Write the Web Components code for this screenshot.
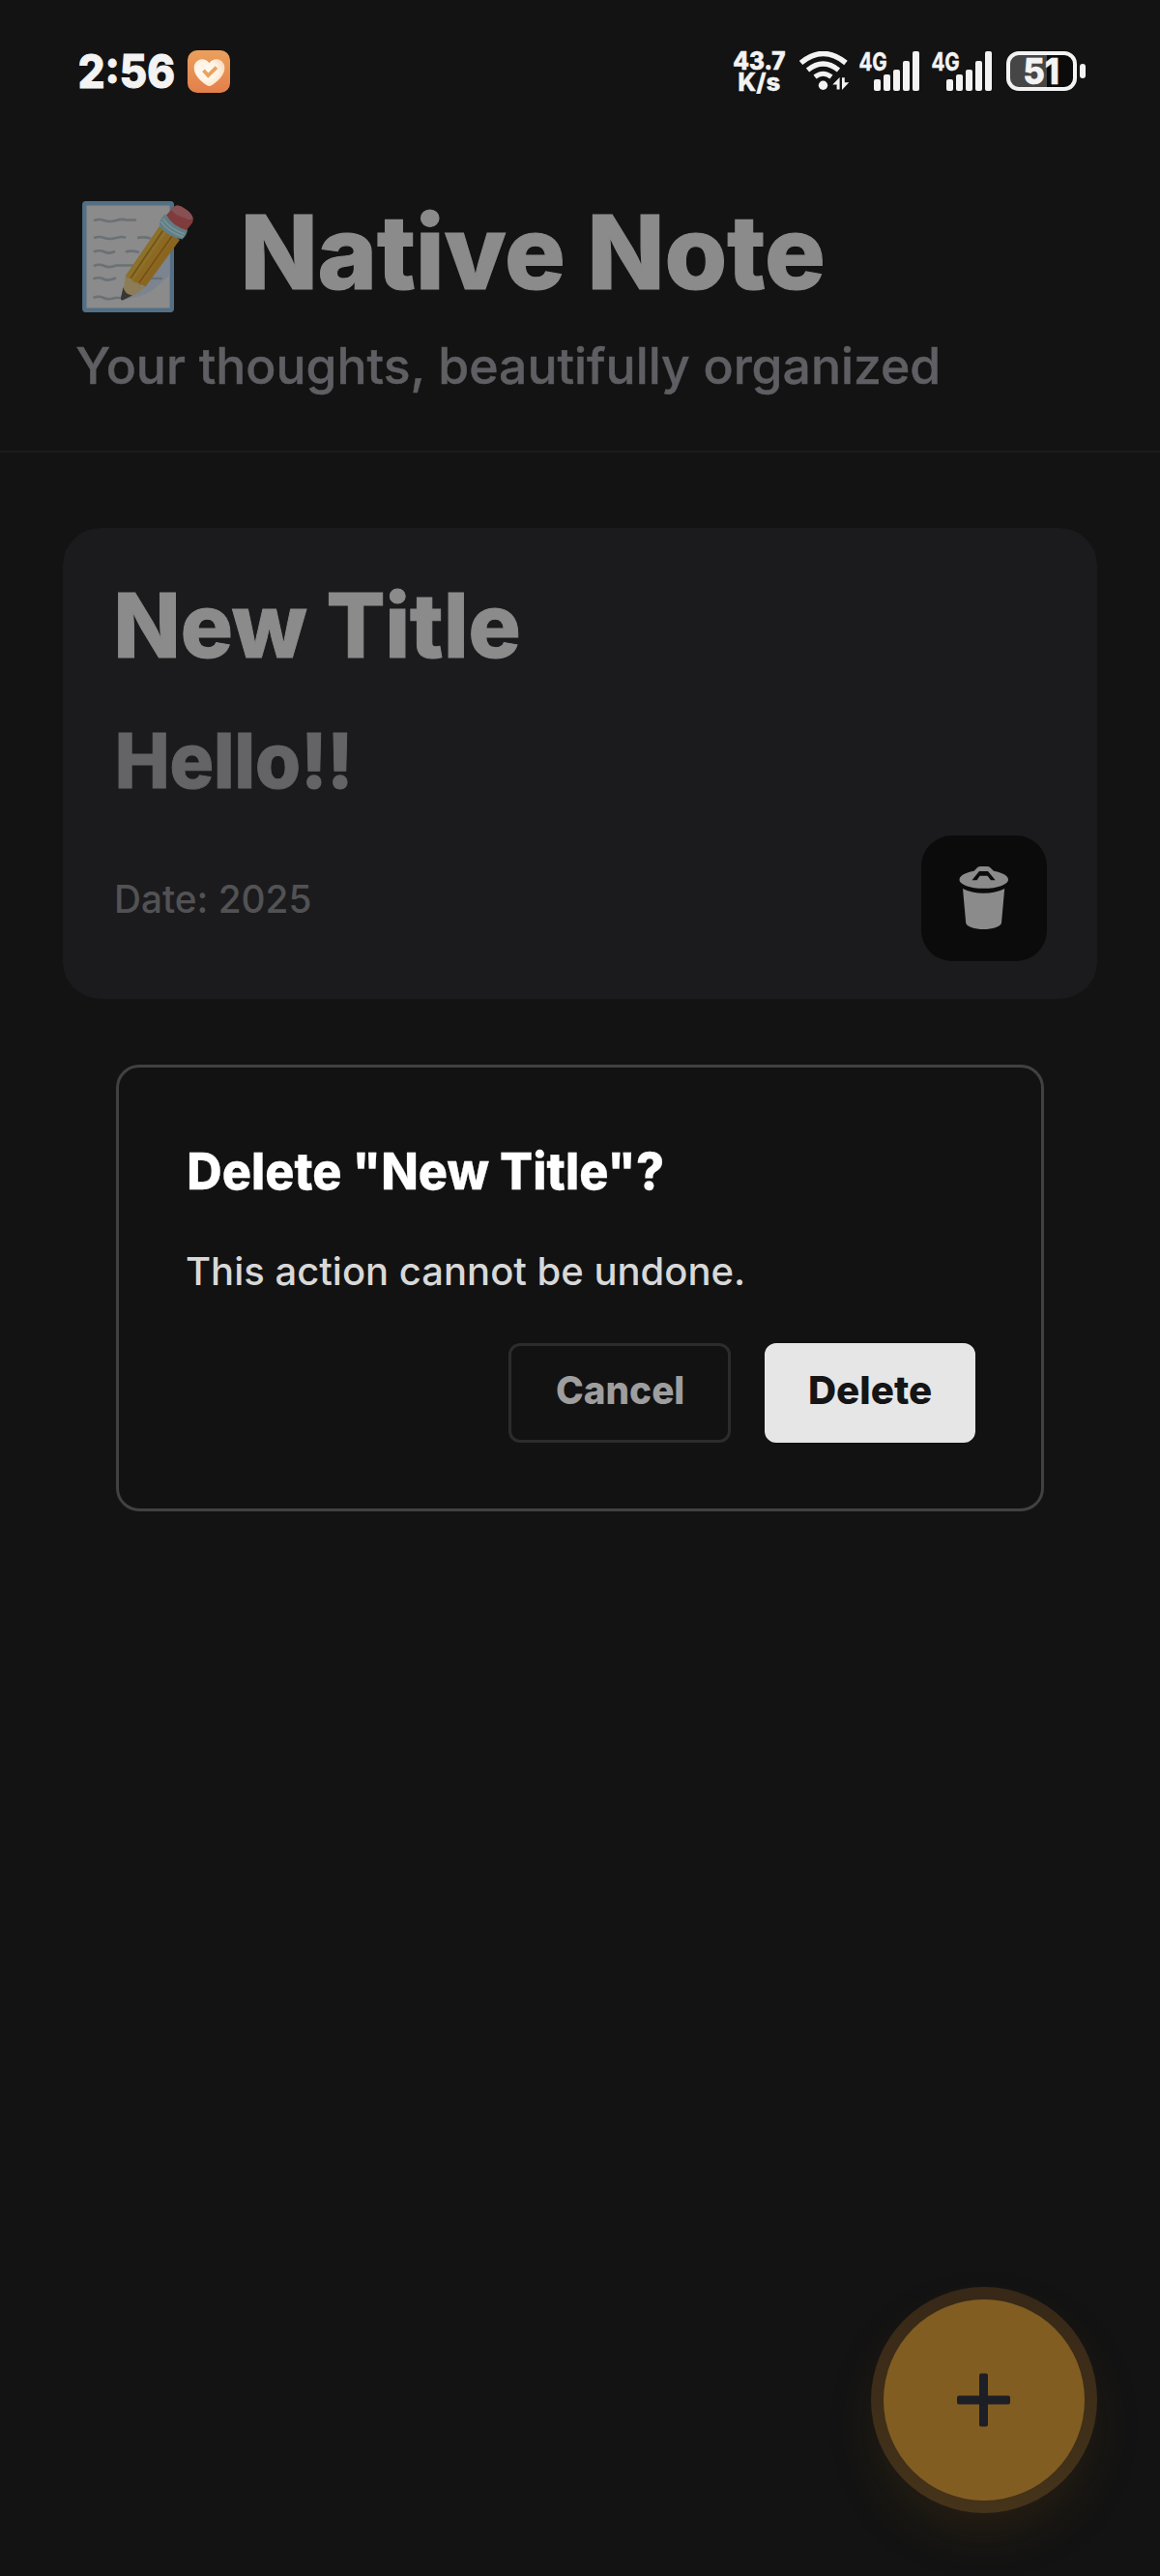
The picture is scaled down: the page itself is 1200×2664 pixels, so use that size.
<!DOCTYPE html>
<html lang="en">
<head>
<meta charset="utf-8">
<title>Native Note</title>
<style>
  html, body { margin: 0; background: #131313; }
  body { font-family: Inter, "Noto Sans", sans-serif; }
</style>
</head>
<body>
<note-app></note-app>
<script>
const ctx = document.createElement('canvas').getContext('2d');

/* One line of text whose box is exactly its ink width by its cap height. */
class InkText extends HTMLElement {
  connectedCallback() {
    const cap = +this.getAttribute('cap');
    const width = +this.getAttribute('width');
    const weight = this.getAttribute('weight') || '800';
    const s = +(this.getAttribute('stroke') || 0);
    const family = 'Inter';
    const text = this.textContent;
    ctx.font = `${weight} 1000px "${family}"`;
    const size = cap / ctx.measureText('H').actualBoundingBoxAscent * 1000;
    ctx.font = `${weight} ${size}px "${family}"`;
    const m = ctx.measureText(text);
    const left = -m.actualBoundingBoxLeft - s / 2;
    const ink = m.actualBoundingBoxLeft + m.actualBoundingBoxRight + s;
    const sx = width / ink;
    const base = cap / 2 + (m.fontBoundingBoxAscent - m.fontBoundingBoxDescent) / 2;
    this.attachShadow({ mode: 'open' }).innerHTML = `
      <style>
        :host { display: block; flex: none; width: ${width}px; height: ${cap}px; }
        span { display: inline-block; white-space: pre; font: ${weight} ${size}px/${cap}px "${family}", "Noto Sans", sans-serif;
          -webkit-text-stroke: ${s}px currentColor; transform-origin: 0 0;
          transform: translate(${-left * sx}px, ${cap - base}px) scaleX(${sx}); }
      </style><span><slot></slot></span>`;
  }
}
customElements.define('ink-text', InkText);

const define = (name, html) => customElements.define(name, class extends HTMLElement {
  constructor() {
    super();
    const t = document.createElement('template');
    t.innerHTML = html;
    this.attachShadow({ mode: 'open' }).append(t.content.cloneNode(true));
  }
});

define('heart-badge', `
  <style>:host{display:block;width:44px;height:44px;flex:none} svg{display:block}</style>
  <svg width="44" height="44" viewBox="0 0 44 44">
    <defs>
      <linearGradient id="o" x1="0" y1="0" x2="0" y2="1"><stop offset="0" stop-color="#eba05c"/><stop offset="1" stop-color="#e37f4b"/></linearGradient>
      <radialGradient id="h" cx=".4" cy=".45" r=".6"><stop offset="0" stop-color="#fffaf3"/><stop offset=".6" stop-color="#fff4e6"/><stop offset="1" stop-color="#f9dfc3"/></radialGradient>
    </defs>
    <rect width="44" height="44" rx="10" fill="url(#o)"/>
    <path d="M22.5 13.2C20.5 10 17.5 9 14.600 9.200C10 9.600 6.700 13.500 6.700 18C6.700 26 14 32.500 20.500 36.500Q22.500 37.600 24.500 36.500C31 32.500 38.400 26 38.400 18C38.400 13.500 35 9.600 30.500 9.200C27.500 9 24.500 10 22.500 13.200Z" fill="url(#h)"/>
    <path d="M16.500 20.800L21.300 26L30 17.600" fill="none" stroke="#e9a35c" stroke-width="3.800"/>
  </svg>`);

define('net-speed', `
  <style>:host{display:flex;flex-direction:column;align-items:center;gap:3px;padding-top:1px}</style>
  <ink-text cap="18.500" width="53" stroke=".6">43.7</ink-text>
  <ink-text cap="18.500" width="43" stroke=".3">K/s</ink-text>`);

define('wifi-icon', `
  <style>:host{display:block;flex:none} svg{display:block}</style>
  <svg width="52" height="42" viewBox="827 53 52 42">
    <g fill="none" stroke="#f3f3f3">
      <path d="M828.500 65Q851.500 46 875 65" stroke-width="5.500"/>
      <path d="M835.500 72.500Q851.500 59.500 867.500 72.500" stroke-width="5.200"/>
      <path d="M843 79.500Q851.500 73 860 79.500" stroke-width="5"/>
    </g>
    <circle cx="851.500" cy="88.300" r="4.700" fill="#f3f3f3"/>
    <path d="M868.600 80V92.500H865.600V87.500H861.300ZM871 93V80.300H873.800V85.300H878.300Z" fill="#f3f3f3"/>
  </svg>`);

define('signal-meter', `
  <style>
    :host{display:block;position:relative;width:62px;height:41px;flex:none}
    .bars{display:flex;align-items:flex-end;justify-content:flex-end;gap:3.200px;height:41px}
    i{width:6.800px;border-radius:2px;background:#f3f3f3}
    ink-text{position:absolute;left:0;top:1px}
  </style>
  <div class="bars"><i style="height:12.500px"></i><i style="height:17px"></i><i style="height:22px"></i><i style="height:31px"></i><i style="height:41px"></i></div>
  <ink-text cap="19" width="28.500" weight="700" stroke=".5">4G</ink-text>`);

define('battery-meter', `
  <style>
    :host{display:flex;align-items:center;gap:3px;flex:none}
    .cell{box-sizing:border-box;width:73px;height:41px;border:4px solid #f3f3f3;border-radius:13px;display:flex;align-items:center;justify-content:center;background:linear-gradient(90deg,#464646 38px,#0b0b0b 38px)}
    .nub{width:6px;height:15px;border-radius:3px;background:#f3f3f3}
  </style>
  <div class="cell"><ink-text cap="27" width="35" stroke=".6">51</ink-text></div><div class="nub"></div>`);

define('status-bar', `
  <style>
    :host{display:flex;justify-content:space-between;align-items:flex-start;height:52px;padding:52px 77px 0 81.500px;color:#f3f3f3}
    .l,.r{display:flex;align-items:flex-start}
    .l{gap:14.500px}.l ink-text{margin-top:4px}
    .r{padding-top:1px}
    wifi-icon{margin-left:15px}
    .s1{margin-left:10px}.s2{margin-left:12.500px}
    battery-meter{margin-left:15.500px}
  </style>
  <div class="l"><ink-text cap="35" width="98" stroke="1">2:56</ink-text><heart-badge></heart-badge></div>
  <div class="r"><net-speed></net-speed><wifi-icon></wifi-icon><signal-meter class="s1"></signal-meter><signal-meter class="s2"></signal-meter><battery-meter></battery-meter></div>`);

define('memo-icon', `
  <style>:host{display:block;flex:none} svg{display:block}</style>
  <svg width="116" height="116" viewBox="85 208 116 116">
    <rect x="87.300" y="210.200" width="90.500" height="110.500" rx="1.500" fill="#8b8b8b" stroke="#536f86" stroke-width="4.400"/>
    <path d="M175.600 284.500L159 299Q150 306 126 310.500L156 270L175.600 250Z" fill="#7c8490"/>
    <g fill="none" stroke="#6b7174" stroke-width="2.700">
      <path d="M97 228Q103 226 108 228T120 228T130 227.500H141"/>
      <path d="M97 246Q103 244 108 246T120 246T130 246M142 246Q148 244.500 156 246.500"/>
      <path d="M97 260.500Q103 258 108 260.500T119 260M130 260.500Q136 258.500 144 261"/>
      <path d="M97 275Q103 272.500 108 275T120 274.500H138"/>
      <path d="M96.500 288.500Q102 286 107 288.500T120 287.500M156 288H168"/>
      <path d="M96.500 308Q102 305.500 107 308T119 308H126"/>
    </g>
    <path d="M129.800 285.500L165.200 234L186 248L150.500 296.500Z" fill="#8a6520"/>
    <path d="M129.800 285.500L165.200 234L174 240L136 293Z" fill="#8b7129"/>
    <path d="M136 293L172 241L180 245.500L144 297Z" fill="#8d6823"/>
    <path d="M135 288L168.500 238.500M143.500 293L178 244" stroke="#745014" stroke-width="1.600"/>
    <path d="M130 285.500Q131.500 289 135.500 287.500Q136 293 143.500 292.500Q144.500 297.500 150.500 296.500L142.500 303L125.500 310.800Z" fill="#8c7d58"/>
    <path d="M127.500 297Q129 304.500 137 305.500L127 310.500Q124.500 311 125 308Z" fill="#383735"/>
    <path d="M171 221.500Q164.500 226 165 234.500Q173.500 245 188.500 247.500Q193.500 243 194 237.500Q179 233.500 171 221.500Z" fill="#627d83"/>
    <path d="M168.500 226Q176 237 191 242M166.500 229Q174 240 190 245" fill="none" stroke="#75939a" stroke-width="1.500"/>
    <path d="M172 222.500L180 213.700Q183 211 189 214.500Q199 220 200 226.500L199 230.500L193 238Q179 234 172 222.500Z" fill="#803b3d"/>
    <path d="M177 217L180.500 213.500Q184 211 190 215Q198.500 220 199.500 225.500Q197 229 190 225Q180 222 177 217Z" fill="#875052"/>
  </svg>`);

define('app-header', `
  <style>
    :host{display:flex;flex-direction:column;box-sizing:border-box;height:364px;padding:104px 79px 0;border-bottom:2px solid #1b1b1b}
    .row{display:flex;align-items:flex-start;gap:51.500px;padding-left:6px;color:#8b8b8b}
    .row ink-text{margin-top:14px}
    .sub{margin-top:35px;color:#5e5e63}
  </style>
  <div class="row"><memo-icon></memo-icon><ink-text cap="77.500" width="598" stroke="1.200">Native Note</ink-text></div>
  <ink-text class="sub" cap="38" width="892" weight="500" stroke=".5">Your thoughts, beautifully organized</ink-text>`);

define('trash-button', `
  <style>:host{display:flex;align-items:center;justify-content:center;width:130px;height:130px;border-radius:32px;background:#0b0b0b;flex:none} svg{display:block}</style>
  <svg width="130" height="130" viewBox="953 864 130 130">
    <path d="M1007.500 900.800L1011 897.200Q1012.400 896 1014.500 896H1021Q1023 896 1024.400 897.200L1028 900.800Q1043 903.800 1043 909.700C1043 914.700 1031.700 918.800 1017.700 918.800S992.500 914.700 992.500 909.700Q992.500 903.800 1007.500 900.800Z" fill="#8b8b8b"/>
    <path d="M1005.500 910.300L1013 901H1022L1029.700 910.300H1025L1021.500 905.800H1013.700L1010.500 910.300Z" fill="#0b0b0b"/>
    <path d="M996 919Q1005 923.800 1017.500 923.800T1039.200 919L1036 954.500C1035 958.500 1026.500 961 1017.500 961S1000 958.500 999.200 954.500Z" fill="#8b8b8b"/>
  </svg>`);

define('note-card', `
  <style>
    :host{display:flex;flex-direction:column;box-sizing:border-box;width:1070px;height:487px;margin:78px 65px 0;padding:67px 52px 0 57px;border-radius:39px;background:#1b1b1d}
    .t{color:#8b8b8b}.b{margin:76px 0 0 -.5px;color:#646466}
    .f{display:flex;justify-content:space-between;align-items:flex-start;margin:49.500px 0 0 -1.500px}
    .d{margin-top:51px;color:#525255}
  </style>
  <ink-text class="t" cap="67.500" width="415" stroke="1">New Title</ink-text>
  <ink-text class="b" cap="58" width="238" stroke="1">Hello!!</ink-text>
  <div class="f"><ink-text class="d" cap="29" width="200" weight="500">Date: 2025</ink-text><trash-button></trash-button></div>`);

define('dialog-button', `
  <style>
    :host{display:flex;box-sizing:border-box;justify-content:center;height:103px;padding-top:31.500px;border:3px solid #2c2c2c;border-radius:12px;width:230px;color:#9e9e9e}
    :host([primary]){width:218px;background:#e6e6e6;border-color:#e6e6e6;color:#151515}
  </style><slot></slot>`);

define('confirm-dialog', `
  <style>
    :host{position:fixed;inset:0;display:flex;align-items:center;justify-content:center}
    .box{box-sizing:border-box;width:960px;height:462px;padding:88px 68px 0 72px;border:3px solid #414141;border-radius:24px;background:#121212;display:flex;flex-direction:column}
    .h{color:#fff}.p{margin:69px 0 0 -2px;color:#d8d8d8}
    .a{display:flex;justify-content:flex-end;gap:35px;margin-top:59.500px}
  </style>
  <div class="box">
    <ink-text class="h" cap="38.500" width="490" stroke=".3">Delete "New Title"?</ink-text>
    <ink-text class="p" cap="29.500" width="575" weight="500">This action cannot be undone.</ink-text>
    <div class="a">
      <dialog-button><ink-text cap="29.500" width="131">Cancel</ink-text></dialog-button>
      <dialog-button primary><ink-text cap="29.500" width="125">Delete</ink-text></dialog-button>
    </div>
  </div>`);

define('add-button', `
  <style>
    :host{position:fixed;right:65px;bottom:65px;box-sizing:border-box;width:234px;height:234px;border-radius:50%;padding:13px;background:linear-gradient(#372817,#45331a);box-shadow:0 26px 52px -10px rgba(92,62,16,.3)}
    .disc{width:208px;height:208px;border-radius:50%;background:#825d22;display:flex;align-items:center;justify-content:center}
    svg{display:block}
  </style>
  <div class="disc"><svg width="56" height="56" viewBox="0 0 56 56" fill="#1c1f26"><rect x="23" y=".5" width="9" height="55" rx="2"/><rect x="0" y="23.500" width="55" height="9" rx="2"/></svg></div>`);

define('note-app', `
  <style>:host{display:block;width:1200px;height:2664px;background:#131313;overflow:hidden}</style>
  <status-bar></status-bar>
  <app-header></app-header>
  <note-card></note-card>
  <add-button></add-button>
  <confirm-dialog></confirm-dialog>`);
</script>
</body>
</html>
